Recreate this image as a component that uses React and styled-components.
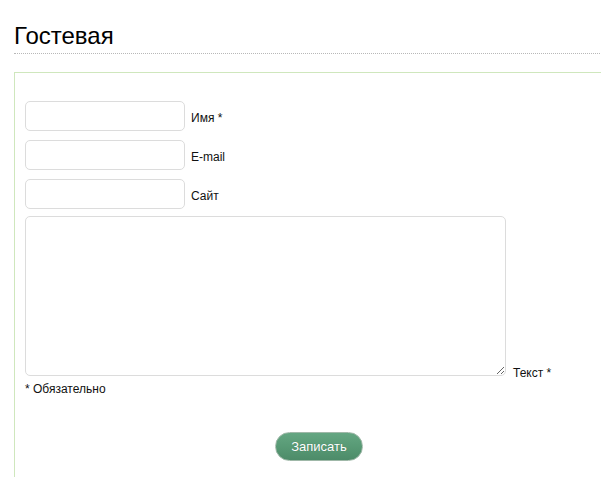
import React from "react";
import styled, { createGlobalStyle } from "styled-components";

const GlobalStyle = createGlobalStyle`
    html, body {
        margin: 0;
        padding: 0;
        background: #fff;
        overflow: hidden;
    }
    body {
        font-family: "Liberation Sans", Arial, sans-serif;
        font-size: 12px;
        color: #000;
    }
`;

const fields = [
    { name: "name", label: "Имя *" },
    { name: "email", label: "E-mail" },
    { name: "site", label: "Сайт" },
];

const App = () => {
    return (
        <Page>
            <GlobalStyle />
            <Title>Гостевая</Title>

            <Fieldset>
                {fields.map(f => (
                    <Row key={f.name}>
                        <Input type="text" name={f.name} />
                        <Label>{f.label}</Label>
                    </Row>
                ))}

                <TextRow>
                    <TextArea name="text" />
                    <TextLabel>Текст *</TextLabel>
                </TextRow>

                <Note>* Обязательно</Note>

                <Actions>
                    <SubmitButton type="button">Записать</SubmitButton>
                </Actions>
            </Fieldset>
        </Page>
    );
};

/* Styled Components */
const Page = styled.div`
    width: 620px;
    margin-left: 14px;
`;

const Title = styled.h1`
    margin: 0;
    padding-top: 22px;
    padding-bottom: 3px;
    font-size: 24px;
    line-height: 28px;
    font-weight: normal;
    color: #000;
    border-bottom: 1px dotted #b8b8b8;
`;

const Fieldset = styled.div`
    box-sizing: border-box;
    width: 610px;
    margin-top: 18px;
    border: 1px solid #cfe7bd;
    padding: 28px 10px 40px 10px;
    min-height: 420px;
`;

const Row = styled.div`
    display: flex;
    align-items: center;
    gap: 6px;
    margin-bottom: 9px;
`;

const Input = styled.input`
    box-sizing: border-box;
    width: 160px;
    height: 30px;
    margin: 0;
    border: 1px solid #dcdcdc;
    border-radius: 5px;
    background: #fff;
    outline: none;
`;

const Label = styled.span`
    padding-top: 3px;
    font-size: 12px;
    line-height: 14px;
    color: #111;
`;

const TextRow = styled.div`
    display: flex;
    align-items: flex-end;
    gap: 7px;
    margin-top: -2px;
`;

const TextLabel = styled(Label)`
    padding-top: 0;
    margin-bottom: -4px;
`;

const TextArea = styled.textarea`
    box-sizing: border-box;
    width: 481px;
    height: 160px;
    margin: 0;
    border: 1px solid #dcdcdc;
    border-radius: 5px;
    background: #fff;
    outline: none;
    display: block;
`;

const Note = styled.div`
    margin-top: 6px;
    font-size: 12px;
    line-height: 14px;
    color: #111;
`;

const Actions = styled.div`
    display: flex;
    justify-content: center;
    margin-top: 36px;
`;

const SubmitButton = styled.button`
    box-sizing: border-box;
    width: 88px;
    height: 29px;
    padding: 0;
    border: 1px solid #9fb8a8;
    border-radius: 15px;
    background: linear-gradient(to bottom, #64a682 0%, #589a75 50%, #4d8b69 100%);
    color: #fff;
    font-family: "Liberation Sans", Arial, sans-serif;
    font-size: 13px;
    text-shadow: 0 0 1px rgba(0, 0, 0, 0.25);
    cursor: pointer;
`;

export default App;
